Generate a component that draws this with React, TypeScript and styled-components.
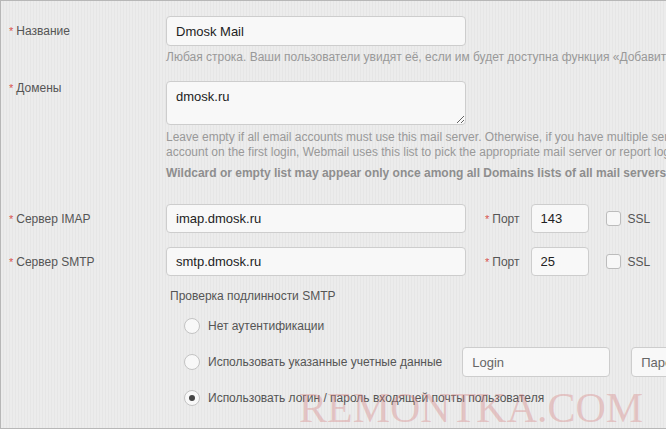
import React from 'react';
import styled, { createGlobalStyle } from 'styled-components';

const GlobalStyle = createGlobalStyle`
  html, body {
    margin: 0;
    padding: 0;
    background: #ebebeb;
  }
  #root {
    width: 666px;
    height: 429px;
    overflow: hidden;
  }
`;

const Frame = styled.div`
  position: relative;
  width: 666px;
  height: 429px;
  box-sizing: border-box;
  border: 1px solid #b7b7b7;
  border-right: none;
  padding-top: 15px;
  overflow: hidden;
  background: repeating-linear-gradient(90deg, #ececec 0 2px, #e6e6e6 2px 3px);
  font-family: "Liberation Sans", Arial, sans-serif;
  color: #555;
`;

const Row = styled.div<{ $gap?: number }>`
  display: flex;
  align-items: flex-start;
  margin-top: ${(p) => p.$gap ?? 0}px;
`;

const LabelCell = styled.div<{ $top?: boolean }>`
  width: 157px;
  flex: none;
  padding-left: 8px;
  display: flex;
  align-items: center;
  height: ${(p) => (p.$top ? '13px' : '29px')};
  font-size: 12px;
  color: #555;
  white-space: nowrap;
`;

const Star = styled.span`
  color: #d9534f;
  font-size: 11px;
  margin-right: 3px;
`;

const Content = styled.div`
  flex: 1;
  min-width: 0;
`;

const Inline = styled.div`
  display: flex;
  align-items: center;
  white-space: nowrap;
`;

const TextInput = styled.input<{ $w: number; $h?: number }>`
  box-sizing: border-box;
  width: ${(p) => p.$w}px;
  height: ${(p) => p.$h ?? 29}px;
  padding: 0 9px;
  border: 1px solid #cdcdcd;
  border-radius: 4px;
  background: #f8f8f8;
  font-family: "Liberation Sans", Arial, sans-serif;
  font-size: 13px;
  color: #222;
  outline: none;
  flex: none;
  &::placeholder {
    color: #666;
  }
`;

const TextArea = styled.textarea`
  display: block;
  box-sizing: border-box;
  width: 300px;
  height: 44px;
  padding: 6px 9px;
  border: 1px solid #cdcdcd;
  border-radius: 4px;
  background: #f8f8f8;
  font-family: "Liberation Sans", Arial, sans-serif;
  font-size: 13px;
  line-height: 17px;
  color: #222;
  outline: none;
`;

const Help = styled.div<{ $gap: number; $bold?: boolean }>`
  margin-top: ${(p) => p.$gap}px;
  font-size: 12px;
  line-height: 15px;
  color: ${(p) => (p.$bold ? '#8e8e8e' : '#999')};
  font-weight: ${(p) => (p.$bold ? 'bold' : 'normal')};
  white-space: nowrap;
`;

const PortLabel = styled.span`
  margin-left: 19px;
  margin-right: 11px;
  font-size: 12px;
  color: #555;
`;

const Check = styled.span`
  display: inline-block;
  box-sizing: border-box;
  width: 15px;
  height: 15px;
  margin-left: 17px;
  margin-right: 7px;
  border: 1px solid #bcbcbc;
  border-radius: 3px;
  background: #f7f7f7;
`;

const CheckText = styled.span`
  font-size: 12px;
  color: #555;
`;

const AuthTitle = styled.div`
  margin-top: 13px;
  padding-left: 4px;
  font-size: 12px;
  line-height: 15px;
  color: #555;
`;

const RadioList = styled.div`
  margin-top: 4px;
  padding-left: 18px;
`;

const RadioRow = styled.div`
  display: flex;
  align-items: center;
  height: 36px;
  white-space: nowrap;
  font-size: 12px;
  color: #555;
`;

const Radio = styled.span<{ $on?: boolean }>`
  position: relative;
  box-sizing: border-box;
  width: 16px;
  height: 16px;
  flex: none;
  margin-right: 8px;
  border: 1px solid #c3c3c3;
  border-radius: 50%;
  background: #f8f8f8;
  &::after {
    content: '';
    display: ${(p) => (p.$on ? 'block' : 'none')};
    position: absolute;
    left: 4px;
    top: 4px;
    width: 6px;
    height: 6px;
    border-radius: 50%;
    background: #444;
  }
`;

const LoginBox = styled(TextInput)`
  margin-left: 20px;
  height: 30px;
`;

const PassBox = styled(TextInput)`
  margin-left: 21px;
  height: 30px;
`;

const Watermark = styled.div`
  position: absolute;
  left: 298px;
  top: 383px;
  font-family: "Liberation Serif", "Times New Roman", serif;
  font-size: 42px;
  line-height: 48px;
  color: rgba(214, 130, 130, 0.38);
  white-space: nowrap;
  pointer-events: none;
`;

export default function App() {
  return (
    <>
      <GlobalStyle />
      <Frame>
        <Row>
          <LabelCell>
            <Star>*</Star>Название
          </LabelCell>
          <Content>
            <TextInput $w={300} $h={30} defaultValue="Dmosk Mail" />
            <Help $gap={4}>
              Любая строка. Ваши пользователи увидят её, если им будет доступна функция «Добавить учётную запись»
            </Help>
          </Content>
        </Row>

        <Row $gap={16}>
          <LabelCell $top>
            <Star>*</Star>Домены
          </LabelCell>
          <Content>
            <TextArea defaultValue="dmosk.ru" />
            <Help $gap={5}>
              Leave empty if all email accounts must use this mail server. Otherwise, if you have multiple servers, list the domains to pick the
              <br />
              account on the first login, Webmail uses this list to pick the appropriate mail server or report login error.
            </Help>
            <Help $gap={6} $bold>
              Wildcard or empty list may appear only once among all Domains lists of all mail servers.
            </Help>
          </Content>
        </Row>

        <Row $gap={23}>
          <LabelCell>
            <Star>*</Star>Сервер IMAP
          </LabelCell>
          <Inline>
            <TextInput $w={300} defaultValue="imap.dmosk.ru" />
            <PortLabel>
              <Star>*</Star>Порт
            </PortLabel>
            <TextInput $w={58} defaultValue="143" />
            <Check />
            <CheckText>SSL</CheckText>
          </Inline>
        </Row>

        <Row $gap={14}>
          <LabelCell>
            <Star>*</Star>Сервер SMTP
          </LabelCell>
          <Inline>
            <TextInput $w={300} defaultValue="smtp.dmosk.ru" />
            <PortLabel>
              <Star>*</Star>Порт
            </PortLabel>
            <TextInput $w={58} defaultValue="25" />
            <Check />
            <CheckText>SSL</CheckText>
          </Inline>
        </Row>

        <Row>
          <LabelCell $top style={{ height: 0 }} />
          <Content>
            <AuthTitle>Проверка подлинности SMTP</AuthTitle>
            <RadioList>
              <RadioRow>
                <Radio />
                Нет аутентификации
              </RadioRow>
              <RadioRow>
                <Radio />
                Использовать указанные учетные данные
                <LoginBox $w={148} placeholder="Login" />
                <PassBox $w={150} placeholder="Пароль" />
              </RadioRow>
              <RadioRow>
                <Radio $on />
                Использовать логин / пароль входящей почты пользователя
              </RadioRow>
            </RadioList>
          </Content>
        </Row>

        <Watermark>REMONTKA.COM</Watermark>
      </Frame>
    </>
  );
}
